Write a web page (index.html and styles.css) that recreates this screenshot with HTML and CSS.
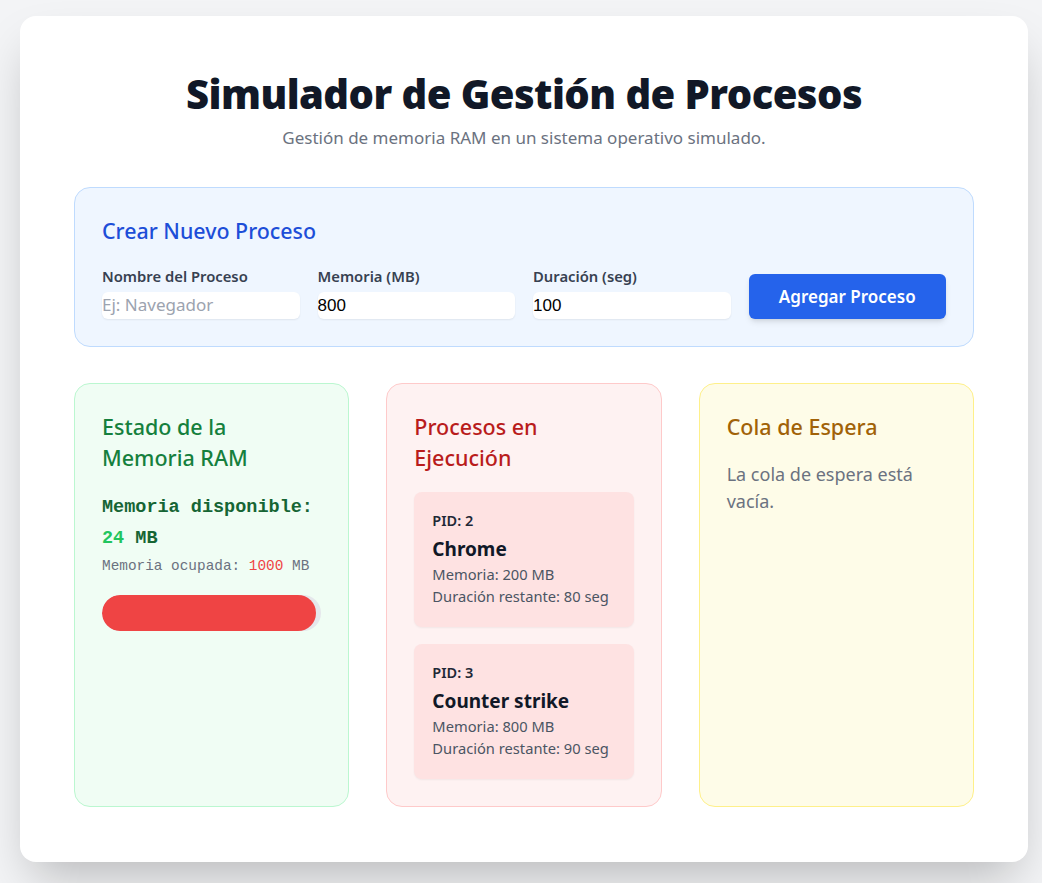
FILE: index.html
```html
<!DOCTYPE html>
<html lang="es">
<head>
<meta charset="utf-8">
<title>Simulador de Gestión de Procesos</title>
<link rel="stylesheet" href="styles.css">
</head>
<body>
<main class="app">
  <header class="header">
    <h1 class="title">Simulador de Gestión de Procesos</h1>
    <p class="subtitle">Gestión de memoria RAM en un sistema operativo simulado.</p>
  </header>

  <section class="create">
    <h2 class="create-title">Crear Nuevo Proceso</h2>
    <form class="create-form">
      <div class="field">
        <label class="label">Nombre del Proceso</label>
        <input class="input" type="text" placeholder="Ej: Navegador">
      </div>
      <div class="field">
        <label class="label">Memoria (MB)</label>
        <input class="input" type="text" value="800">
      </div>
      <div class="field">
        <label class="label">Duración (seg)</label>
        <input class="input" type="text" value="100">
      </div>
      <div class="field">
        <button class="btn" type="button">Agregar Proceso</button>
      </div>
    </form>
  </section>

  <section class="cards">
    <div class="card card-green">
      <h2 class="card-title green">Estado de la<br>Memoria RAM</h2>
      <p class="mem-free">Memoria disponible: <span class="free-num">24</span> MB</p>
      <p class="mem-used">Memoria ocupada: <span class="used-num">1000</span> MB</p>
      <div class="bar"><div class="bar-fill" style="width: 97.66%"></div></div>
    </div>

    <div class="card card-red">
      <h2 class="card-title red">Procesos en<br>Ejecución</h2>
      <div class="proc-list">
        <div class="proc">
          <p class="pid">PID: 2</p>
          <p class="pname">Chrome</p>
          <p class="pinfo">Memoria: 200 MB</p>
          <p class="pinfo">Duración restante: 80 seg</p>
        </div>
        <div class="proc">
          <p class="pid">PID: 3</p>
          <p class="pname">Counter strike</p>
          <p class="pinfo">Memoria: 800 MB</p>
          <p class="pinfo">Duración restante: 90 seg</p>
        </div>
      </div>
    </div>

    <div class="card card-yellow">
      <h2 class="card-title yellow">Cola de Espera</h2>
      <p class="empty">La cola de espera está vacía.</p>
    </div>
  </section>
</main>
</body>
</html>
```

FILE: styles.css
```css
* { box-sizing: border-box; }

html, body {
  margin: 0;
  padding: 0;
}

body {
  background: #f3f4f6;
  font-family: "Noto Sans", "Open Sans", sans-serif;
  color: #111827;
  padding: 16px 14px 21px 20px;
}

p, h1, h2 { margin: 0; }

.app {
  background: #ffffff;
  border-radius: 16px;
  box-shadow: 0 25px 50px -12px rgba(0, 0, 0, 0.25);
  padding: 54px 54px 55px;
}

.header {
  text-align: center;
  margin-bottom: 37px;
}

.title {
  font-size: 40px;
  line-height: 48px;
  font-weight: 900;
  color: #111827;
  letter-spacing: -0.55px;
}

.subtitle {
  margin-top: 8px;
  font-size: 17px;
  line-height: 24px;
  color: #6b7280;
}

.create {
  background: #eff6ff;
  border: 1px solid #bfdbfe;
  border-radius: 16px;
  padding: 27px;
  margin-bottom: 36px;
}

.create-title {
  font-size: 21.4px;
  line-height: 31px;
  font-weight: 500;
  color: #1d4ed8;
  margin-bottom: 20px;
}

.create-form {
  display: grid;
  grid-template-columns: repeat(4, minmax(0, 1fr));
  column-gap: 18px;
  align-items: end;
}

.field {
  display: flex;
  flex-direction: column;
  min-width: 0;
}

.label {
  font-size: 14.8px;
  line-height: 20px;
  font-weight: 600;
  color: #374151;
  margin-bottom: 6px;
}

.input {
  width: 100%;
  height: 27px;
  border: none;
  border-radius: 6px;
  background: #fff;
  padding: 0;
  font-family: "Liberation Sans", Arial, sans-serif;
  font-size: 17px;
  color: #000;
  box-shadow: 0 1px 2px rgba(0, 0, 0, 0.07);
  outline: none;
}

.input::placeholder {
  font-family: "Noto Sans", sans-serif;
  color: #9ca3af;
}

.btn {
  width: 100%;
  height: 45px;
  border: none;
  border-radius: 6px;
  background: #2563eb;
  color: #fff;
  font-family: "Noto Sans", sans-serif;
  font-size: 17px;
  font-weight: 600;
  box-shadow: 0 4px 6px -1px rgba(0, 0, 0, 0.1), 0 2px 4px -2px rgba(0, 0, 0, 0.1);
  cursor: pointer;
}

.cards {
  display: grid;
  grid-template-columns: repeat(3, minmax(0, 1fr));
  column-gap: 37px;
}

.card {
  border-radius: 16px;
  border: 1px solid;
  padding: 27px;
}

.card-green { background: #f0fdf4; border-color: #bbf7d0; }
.card-red { background: #fef2f2; border-color: #fecaca; }
.card-yellow { background: #fefce8; border-color: #fef08a; }

.card-title {
  font-size: 21.5px;
  line-height: 31px;
  font-weight: 500;
  margin-bottom: 19px;
}

.green { color: #15803d; }
.red { color: #b91c1c; }
.yellow { color: #a16207; }

.mem-free {
  font-family: "Liberation Mono", "DejaVu Sans Mono", monospace;
  font-weight: 700;
  font-size: 18.5px;
  line-height: 31px;
  color: #166534;
}

.free-num { color: #22c55e; }

.mem-used {
  font-family: "Liberation Mono", "DejaVu Sans Mono", monospace;
  font-size: 14.4px;
  line-height: 20px;
  color: #6b7280;
  margin-top: 2px;
}

.used-num { color: #ef4444; }

.bar {
  margin-top: 19px;
  height: 36px;
  border-radius: 9999px;
  background: #e5e7eb;
  overflow: hidden;
}

.bar-fill {
  height: 100%;
  background: #ef4444;
  border-radius: 9999px;
}

.proc-list {
  display: flex;
  flex-direction: column;
  gap: 17px;
}

.proc {
  background: #fee2e2;
  border-radius: 8px;
  padding: 18px 18px 20px;
  box-shadow: 0 1px 2px rgba(0, 0, 0, 0.05);
}

.pid {
  font-size: 14.5px;
  line-height: 20px;
  font-weight: 600;
  color: #1f2937;
}

.pname {
  margin-top: 5px;
  font-size: 19px;
  line-height: 28px;
  font-weight: 700;
  color: #111827;
}

.pinfo {
  font-size: 14.7px;
  line-height: 22px;
  color: #4b5563;
}

.empty {
  font-size: 18px;
  line-height: 27px;
  color: #6b7280;
}
```
